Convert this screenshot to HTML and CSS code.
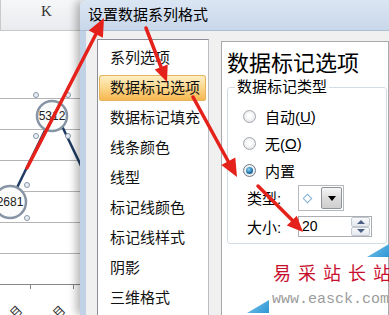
FILE: index.html
```html
<!DOCTYPE html>
<html lang="zh-CN">
<head>
  <meta charset="UTF-8" />
  <title>设置数据系列格式</title>
  <link rel="stylesheet" href="styles.css">
</head>
<body>
<div class="screen">

  <!-- worksheet with the line chart behind the dialog -->
  <div class="sheet">
    <div class="col-head">K</div>
    <svg class="chart" width="80" height="284" viewBox="0 31 80 284">
      <g stroke="#b4b4b4" stroke-width="1">
        <line x1="0" y1="98.5" x2="80" y2="98.5" />
        <line x1="0" y1="129.5" x2="80" y2="129.5" />
        <line x1="0" y1="160.5" x2="80" y2="160.5" />
        <line x1="0" y1="191.5" x2="80" y2="191.5" />
        <line x1="0" y1="222.5" x2="80" y2="222.5" />
        <line x1="0" y1="253.5" x2="80" y2="253.5" />
      </g>
      <g stroke="#868686" stroke-width="1">
        <line x1="0" y1="284.5" x2="80" y2="284.5" />
        <line x1="30.5" y1="284" x2="30.5" y2="289" />
        <line x1="73.5" y1="284" x2="73.5" y2="289" />
      </g>
      <g class="axis-label">
        <text transform="translate(10 324) rotate(-45)">1月</text>
        <text transform="translate(53 324) rotate(-45)">2月</text>
      </g>
      <g stroke="#1f3b63" stroke-width="2.5" fill="none">
        <polyline points="10,202 52,116" />
        <line x1="62" y1="126" x2="84" y2="172" />
      </g>
      <g class="marker">
        <circle cx="52" cy="116" r="15" />
        <text x="52" y="120">5312</text>
      </g>
      <g class="handle">
        <circle cx="36" cy="95" r="2.5" />
        <circle cx="68" cy="95" r="2.5" />
        <circle cx="36" cy="136" r="2.5" />
        <circle cx="68" cy="136" r="2.5" />
      </g>
      <g class="marker">
        <circle cx="10" cy="202" r="16" />
        <text x="10" y="206">2681</text>
      </g>
      <g class="handle">
        <circle cx="27" cy="185" r="2.5" />
        <circle cx="27" cy="218" r="2.5" />
      </g>
    </svg>
  </div>

  <!-- format data series dialog -->
  <div class="dialog">
    <div class="title">设置数据系列格式</div>
    <div class="dialog-body">
      <ul class="nav">
        <li>系列选项</li>
        <li class="active">数据标记选项</li>
        <li>数据标记填充</li>
        <li>线条颜色</li>
        <li>线型</li>
        <li>标记线颜色</li>
        <li>标记线样式</li>
        <li>阴影</li>
        <li>三维格式</li>
      </ul>

      <div class="panel">
        <h1>数据标记选项</h1>
        <fieldset class="group">
          <legend>数据标记类型</legend>
          <div class="opt"><span class="radio"></span>自动(<u>U</u>)</div>
          <div class="opt"><span class="radio"></span>无(<u>O</u>)</div>
          <div class="opt"><span class="radio checked"></span>内置</div>
          <div class="field">
            <span class="lbl">类型:</span>
            <div class="combo">
              <span class="combo-val"><i class="diamond"></i></span>
              <span class="combo-btn"><i class="caret"></i></span>
            </div>
          </div>
          <div class="field field-size">
            <span class="lbl">大小:</span>
            <div class="spin">
              <span class="spin-val">20</span>
              <span class="spin-btns">
                <span class="spin-btn"><i class="tri-up"></i></span>
                <span class="spin-btn"><i class="tri-down"></i></span>
              </span>
            </div>
          </div>
        </fieldset>
      </div>
    </div>
  </div>

  <!-- site watermark -->
  <div class="corner corner-a"></div>
  <div class="corner corner-b"></div>
  <div class="watermark">
    <div class="wm-name">易采站长站</div>
    <div class="wm-url">www.easck.com</div>
  </div>

  <!-- red annotation arrows -->
  <svg class="arrows" width="389" height="315">
    <g stroke="#e5211b" stroke-width="3.5" stroke-linecap="round" fill="#e5211b">
      <line x1="27" y1="168" x2="96" y2="34" />
      <polygon points="104,18 102.9,37.7 88.7,30.4" stroke="none" />
      <line x1="146" y1="28" x2="161" y2="67" />
      <polygon points="167,82 154.7,69.6 167.7,64.6" stroke="none" />
      <line x1="193" y1="97" x2="228" y2="161" />
      <polygon points="237,177 221.3,165.1 235.3,157.4" stroke="none" />
      <line x1="258" y1="186" x2="292" y2="220" />
      <polygon points="303,232 286.8,225.5 296.8,215.7" stroke="none" />
    </g>
  </svg>

</div>
</body>
</html>
```

FILE: styles.css
```css
  html, body {
    margin: 0;
    padding: 0;
    background: #ffffff;
  }

  body {
    font-family: 'Liberation Sans', 'Noto Sans CJK SC', sans-serif;
    color: #000;
  }

  .screen {
    position: relative;
    width: 389px;
    height: 315px;
    overflow: hidden;
    display: flex;
  }

  /* worksheet */
  .sheet {
    width: 80px;
    flex: none;
    background: #fff;
  }

  .col-head {
    height: 30px;
    line-height: 22px;
    border-bottom: 1px solid #c9c9c9;
    border-left: 1px solid #c9c9c9;
    background: linear-gradient(#f6f7f8, #e9ebee);
    font-family: 'Liberation Serif', serif;
    font-size: 15px;
    color: #333;
    padding-left: 40px;
  }

  .chart {
    display: block;
  }

  .axis-label text {
    font-family: 'Noto Sans CJK SC', sans-serif;
    font-size: 12px;
    fill: #333;
  }

  .marker circle {
    fill: #fbfbfb;
    stroke: #8794a5;
    stroke-width: 2.5;
  }

  .marker text {
    font-family: 'Liberation Sans', sans-serif;
    font-size: 12px;
    text-anchor: middle;
    fill: #222;
  }

  .handle circle {
    fill: #e9eef5;
    stroke: #8a97a8;
    stroke-width: 1;
  }

  /* dialog */
  .dialog {
    position: relative;
    flex: 1;
    display: flex;
    flex-direction: column;
    border-top-left-radius: 6px;
    box-shadow: -4px 0 8px rgba(0, 0, 0, 0.28);
    background: #c6d6ea;
  }

  .title {
    height: 32px;
    line-height: 30px;
    padding-left: 8px;
    font-size: 15px;
    background: linear-gradient(#dbe6f3, #c8d7ea);
    border-bottom: 1px solid #aebfd4;
    box-sizing: border-box;
    border-top-left-radius: 6px;
  }

  .dialog-body {
    flex: 1;
    display: flex;
    align-items: flex-start;
    background: #f0f0f0;
    border-left: 6px solid #c2d2e6;
    padding: 8px 0 0 11px;
  }

  .nav {
    list-style: none;
    margin: 0;
    padding: 5px 1px 0 1px;
    width: 108px;
    height: 300px;
    background: #fff;
    border: 1px solid #8c9096;
    border-right-color: #b9bcc0;
  }

  .nav li {
    height: 26px;
    line-height: 26px;
    margin-bottom: 4px;
    padding-left: 11px;
    font-size: 15px;
    white-space: nowrap;
    color: #111;
  }

  .nav li.active {
    margin-right: 1px;
    border-radius: 3px;
    box-shadow: inset 0 0 0 1px #e6b45f;
    background: linear-gradient(#fdf0c8, #fbd991 45%, #f6b54b);
  }

  .panel {
    flex: 1;
    margin: 2px 0 0 12px;
    height: 300px;
    background: #fff;
    border: 1px solid #a9a9a9;
    padding-left: 5px;
  }

  .panel h1 {
    margin: 9px 0 0 0;
    font-size: 22px;
    line-height: 26px;
    font-weight: normal;
    white-space: nowrap;
  }

  .group {
    width: 143px;
    margin: 1px 0 0 0;
    padding: 7px 0 6px 15px;
    border: 1px solid #d5dde4;
    border-radius: 3px;
  }

  .group legend {
    margin-left: -8px;
    padding: 0 2px;
    font-size: 15px;
    line-height: 18px;
    white-space: nowrap;
  }

  .opt {
    display: flex;
    align-items: center;
    height: 27px;
    font-size: 15px;
    white-space: nowrap;
  }

  .radio {
    position: relative;
    width: 13px;
    height: 13px;
    margin-right: 9px;
    border: 1px solid #a3a7ad;
    border-radius: 50%;
    box-sizing: border-box;
    background: radial-gradient(circle at 50% 45%, #ffffff 20%, #d9dcdf 100%);
  }

  .radio.checked {
    border-color: #6c7a88;
  }

  .radio.checked::after {
    content: "";
    position: absolute;
    left: 2px;
    top: 2px;
    width: 7px;
    height: 7px;
    border-radius: 50%;
    background: radial-gradient(circle at 40% 35%, #8fd3f5, #1b6fa6 60%, #0c3c66);
  }

  .field {
    display: flex;
    align-items: center;
    margin-left: 4px;
    font-size: 15px;
    white-space: nowrap;
  }

  .field .lbl {
    width: 51px;
  }

  .combo {
    display: flex;
    width: 46px;
    height: 26px;
    margin-top: 1px;
    border: 1px solid #b5b8bc;
    box-sizing: border-box;
    background: #fff;
  }

  .combo-val {
    flex: 1;
    display: flex;
    align-items: center;
    padding-left: 5px;
  }

  .diamond {
    width: 5px;
    height: 5px;
    border: 1px solid #7fb0d6;
    transform: rotate(45deg);
  }

  .combo-btn {
    width: 19px;
    margin: 1px 1px 1px 0;
    display: flex;
    align-items: center;
    justify-content: center;
    border: 1px solid #8f9296;
    border-radius: 2px;
    background: linear-gradient(#f6f6f6, #dcdcdc 50%, #cfcfcf);
  }

  .caret {
    width: 0;
    height: 0;
    border-left: 4px solid transparent;
    border-right: 4px solid transparent;
    border-top: 5px solid #000;
  }

  .field-size {
    margin-top: 5px;
  }

  .spin {
    display: flex;
    width: 74px;
    height: 21px;
    border: 1px solid #abadb3;
    box-sizing: border-box;
    background: #fff;
  }

  .spin-val {
    flex: 1;
    padding-left: 3px;
    font-size: 14px;
    line-height: 19px;
  }

  .spin-btns {
    display: flex;
    flex-direction: column;
    width: 19px;
    margin-right: 1px;
  }

  .spin-btn {
    flex: 1;
    display: flex;
    align-items: center;
    justify-content: center;
    border: 1px solid #c4cad2;
    border-radius: 2px;
    background: linear-gradient(#f8f9fb, #e4e8ee);
  }

  .tri-up, .tri-down {
    width: 0;
    height: 0;
    border-left: 4px solid transparent;
    border-right: 4px solid transparent;
  }

  .tri-up {
    border-bottom: 4px solid #4b5f84;
  }

  .tri-down {
    border-top: 4px solid #4b5f84;
  }

  /* watermark */
  .watermark {
    position: absolute;
    left: 272px;
    top: 259px;
    white-space: nowrap;
  }

  .wm-name {
    font-family: 'Noto Sans CJK SC', sans-serif;
    font-size: 18px;
    line-height: 26px;
    letter-spacing: 7px;
    color: #c8102e;
    padding-left: 1px;
  }

  .wm-url {
    font-family: 'Liberation Mono', monospace;
    font-size: 15px;
    line-height: 24px;
    color: #9c9c9c;
    margin-top: 3px;
  }

  .corner {
    position: absolute;
    width: 22px;
    height: 13px;
    background: linear-gradient(135deg, #7cc6ec, #2c96d3);
    clip-path: polygon(100% 0, 100% 100%, 0 100%);
  }

  .corner-a {
    left: 367px;
    top: 244px;
  }

  .corner-b {
    left: 247px;
    top: 300px;
  }

  .arrows {
    position: absolute;
    left: 0;
    top: 0;
    pointer-events: none;
  }
```
